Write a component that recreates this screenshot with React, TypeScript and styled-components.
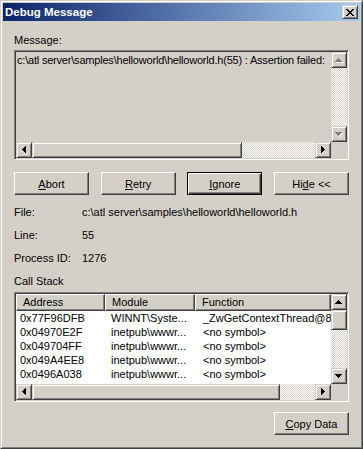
import styled, { createGlobalStyle, css } from "styled-components";

const GlobalStyle = createGlobalStyle`
  html, body {
    margin: 0;
    padding: 0;
    background: #d4d0c8;
  }
  body {
    font-family: "Liberation Sans", Arial, sans-serif;
    font-size: 11px;
    color: #000;
  }
  * {
    box-sizing: border-box;
  }
`;

const raised = css`
  border: 1px solid;
  border-color: #d4d0c8 #404040 #404040 #d4d0c8;
  box-shadow: inset 1px 1px #fff, inset -1px -1px #808080;
`;

const hatch = css`
  background: repeating-conic-gradient(#fff 0 25%, #d4d0c8 0 50%) 0 0 / 2px 2px;
`;

const Window = styled.div`
  width: 363px;
  height: 449px;
  background: #d4d0c8;
  border: 1px solid;
  border-color: #d4d0c8 #404040 #404040 #d4d0c8;
  box-shadow: inset 1px 1px #fff, inset -1px -1px #808080;
  padding: 2px;
  display: flex;
  flex-direction: column;
`;

const TitleBar = styled.div`
  height: 18px;
  display: flex;
  align-items: center;
  padding: 0 2px 0 2px;
  background: linear-gradient(to right, #0a246a, #a6caf0);
  color: #fff;
  font-weight: bold;
  font-size: 11.5px;
`;

const CloseButton = styled.div`
  ${raised};
  margin-left: auto;
  width: 16px;
  height: 14px;
  background: #d4d0c8;
  display: flex;
  align-items: center;
  justify-content: center;
`;

const Body = styled.div`
  display: flex;
  flex-direction: column;
  padding: 13px 11px 0;
`;

const Label = styled.div<{ $gap?: number }>`
  line-height: 13px;
  height: 13px;
  margin-top: ${(p) => p.$gap ?? 0}px;
`;

const Sunken = styled.div<{ $bg: string; $gap: number }>`
  height: 110px;
  margin-top: ${(p) => p.$gap}px;
  border: 1px solid;
  border-color: #808080 #fff #fff #808080;
  box-shadow: inset 1px 1px #404040, inset -1px -1px #d4d0c8;
  padding: 1px;
  background: ${(p) => p.$bg};
  display: grid;
  grid-template-columns: minmax(0, 1fr) 16px;
  grid-template-rows: minmax(0, 1fr) 16px;
`;

const MessageText = styled.div`
  padding: 2px 0 0 1px;
  line-height: 13px;
  letter-spacing: -0.2px;
  white-space: nowrap;
  overflow: hidden;
`;

const VScroll = styled.div`
  display: flex;
  flex-direction: column;
`;

const HScroll = styled.div`
  display: flex;
`;

const Corner = styled.div`
  background: #d4d0c8;
`;

const ScrollBtn = styled.div`
  ${raised};
  width: 16px;
  height: 16px;
  flex: none;
  background: #d4d0c8;
  display: flex;
  align-items: center;
  justify-content: center;
`;

const Track = styled.div`
  ${hatch};
  flex: 1;
`;

const Thumb = styled.div<{ $w?: number; $h?: number }>`
  ${raised};
  background: #d4d0c8;
  flex: none;
  width: ${(p) => (p.$w ? `${p.$w}px` : "16px")};
  height: ${(p) => (p.$h ? `${p.$h}px` : "16px")};
`;

const Buttons = styled.div`
  display: flex;
  justify-content: space-between;
  margin-top: 12px;
`;

const PushButton = styled.button<{ $default?: boolean }>`
  width: 75px;
  height: 23px;
  padding: 0;
  margin: 0;
  font-family: inherit;
  font-size: 11px;
  color: #000;
  background: #d4d0c8;
  ${(p) =>
    p.$default
      ? css`
          border: 1px solid #000;
          box-shadow: inset 1px 1px #fff, inset -1px -1px #404040,
            inset -2px -2px #808080;
        `
      : css`
          border: 1px solid;
          border-color: #fff #404040 #404040 #fff;
          box-shadow: inset -1px -1px #808080;
        `}
`;

const InfoGrid = styled.div`
  display: grid;
  grid-template-columns: 68px 1fr;
  grid-auto-rows: 23px;
  align-items: center;
  margin-top: 6px;
  line-height: 13px;
`;

const ListArea = styled.div`
  overflow: hidden;
  white-space: nowrap;
`;

const cols = "89px 90px 1fr";

const HeaderRow = styled.div`
  display: grid;
  grid-template-columns: ${cols};
  height: 17px;
`;

const HeaderCell = styled.div`
  border: 1px solid;
  border-color: #fff #404040 #404040 #fff;
  box-shadow: inset -1px -1px #808080;
  background: #d4d0c8;
  padding-left: 6px;
  line-height: 14px;
  overflow: hidden;
`;

const Row = styled.div`
  display: grid;
  grid-template-columns: ${cols};
  height: 14px;
  line-height: 14px;
`;

const Cell = styled.div<{ $pad: number }>`
  padding-left: ${(p) => p.$pad}px;
  overflow: hidden;
`;

const Footer = styled.div`
  display: flex;
  justify-content: flex-end;
  margin-top: 10px;
`;

type Dir = "up" | "down" | "left" | "right";

const arrowPaths: Record<Dir, string> = {
  up: "M3 0h1v1H3z M2 1h3v1H2z M1 2h5v1H1z M0 3h7v1H0z",
  down: "M0 0h7v1H0z M1 1h5v1H1z M2 2h3v1H2z M3 3h1v1H3z",
  left: "M0 3h1v1H0z M1 2h1v3H1z M2 1h1v5H2z M3 0h1v7H3z",
  right: "M0 0h1v7H0z M1 1h1v5H1z M2 2h1v3H2z M3 3h1v1H3z",
};

const Arrow = ({ dir, disabled }: { dir: Dir; disabled?: boolean }) => {
  const vert = dir === "up" || dir === "down";
  const w = vert ? 8 : 5;
  const h = vert ? 5 : 8;
  return (
    <svg width={w} height={h} viewBox={`0 0 ${w} ${h}`} shapeRendering="crispEdges">
      {disabled && <path d={arrowPaths[dir]} fill="#fff" transform="translate(1 1)" />}
      <path d={arrowPaths[dir]} fill={disabled ? "#808080" : "#000"} />
    </svg>
  );
};

const CloseGlyph = () => (
  <svg width="8" height="7" viewBox="0 0 8 7" shapeRendering="crispEdges">
    <path
      d="M0 0h2v1H0z M6 0h2v1H6z M1 1h2v1H1z M5 1h2v1H5z M2 2h4v1H2z M3 3h2v1H3z M2 4h4v1H2z M1 5h2v1H1z M5 5h2v1H5z M0 6h2v1H0z M6 6h2v1H6z"
      fill="#000"
    />
  </svg>
);

const frames = [
  ["0x77F96DFB", "WINNT\\Syste...", "_ZwGetContextThread@8 - 0x0B"],
  ["0x04970E2F", "inetpub\\wwwr...", "<no symbol>"],
  ["0x049704FF", "inetpub\\wwwr...", "<no symbol>"],
  ["0x049A4EE8", "inetpub\\wwwr...", "<no symbol>"],
  ["0x0496A038", "inetpub\\wwwr...", "<no symbol>"],
  ["0x04983FE8", "inetpub\\wwwr...", "<no symbol>"],
];

export default function App() {
  return (
    <>
      <GlobalStyle />
      <Window>
        <TitleBar>
          Debug Message
          <CloseButton>
            <CloseGlyph />
          </CloseButton>
        </TitleBar>
        <Body>
          <Label>Message:</Label>
          <Sunken $bg="#d4d0c8" $gap={3}>
            <MessageText>
              c:\atl server\samples\helloworld\helloworld.h(55) : Assertion failed:
            </MessageText>
            <VScroll>
              <ScrollBtn>
                <Arrow dir="up" disabled />
              </ScrollBtn>
              <Track />
              <ScrollBtn>
                <Arrow dir="down" disabled />
              </ScrollBtn>
            </VScroll>
            <HScroll>
              <ScrollBtn>
                <Arrow dir="left" />
              </ScrollBtn>
              <Thumb $w={210} />
              <Track />
              <ScrollBtn>
                <Arrow dir="right" />
              </ScrollBtn>
            </HScroll>
            <Corner />
          </Sunken>

          <Buttons>
            <PushButton>
              <u>A</u>bort
            </PushButton>
            <PushButton>
              <u>R</u>etry
            </PushButton>
            <PushButton $default>
              <u>I</u>gnore
            </PushButton>
            <PushButton>
              Hi<u>d</u>e &lt;&lt;
            </PushButton>
          </Buttons>

          <InfoGrid>
            <span>File:</span>
            <span>c:\atl server\samples\helloworld\helloworld.h</span>
            <span>Line:</span>
            <span>55</span>
            <span>Process ID:</span>
            <span>1276</span>
          </InfoGrid>

          <Label $gap={5}>Call Stack</Label>
          <Sunken $bg="#fff" $gap={4}>
            <ListArea>
              <HeaderRow>
                <HeaderCell>Address</HeaderCell>
                <HeaderCell>Module</HeaderCell>
                <HeaderCell>Function</HeaderCell>
              </HeaderRow>
              {frames.map(([addr, mod, fn]) => (
                <Row key={addr}>
                  <Cell $pad={4}>{addr}</Cell>
                  <Cell $pad={6}>{mod}</Cell>
                  <Cell $pad={8}>{fn}</Cell>
                </Row>
              ))}
            </ListArea>
            <VScroll>
              <ScrollBtn>
                <Arrow dir="up" />
              </ScrollBtn>
              <Thumb $h={20} />
              <Track />
              <ScrollBtn>
                <Arrow dir="down" />
              </ScrollBtn>
            </VScroll>
            <HScroll>
              <ScrollBtn>
                <Arrow dir="left" />
              </ScrollBtn>
              <Thumb $w={248} />
              <Track />
              <ScrollBtn>
                <Arrow dir="right" />
              </ScrollBtn>
            </HScroll>
            <Corner />
          </Sunken>

          <Footer>
            <PushButton>
              <u>C</u>opy Data
            </PushButton>
          </Footer>
        </Body>
      </Window>
    </>
  );
}
